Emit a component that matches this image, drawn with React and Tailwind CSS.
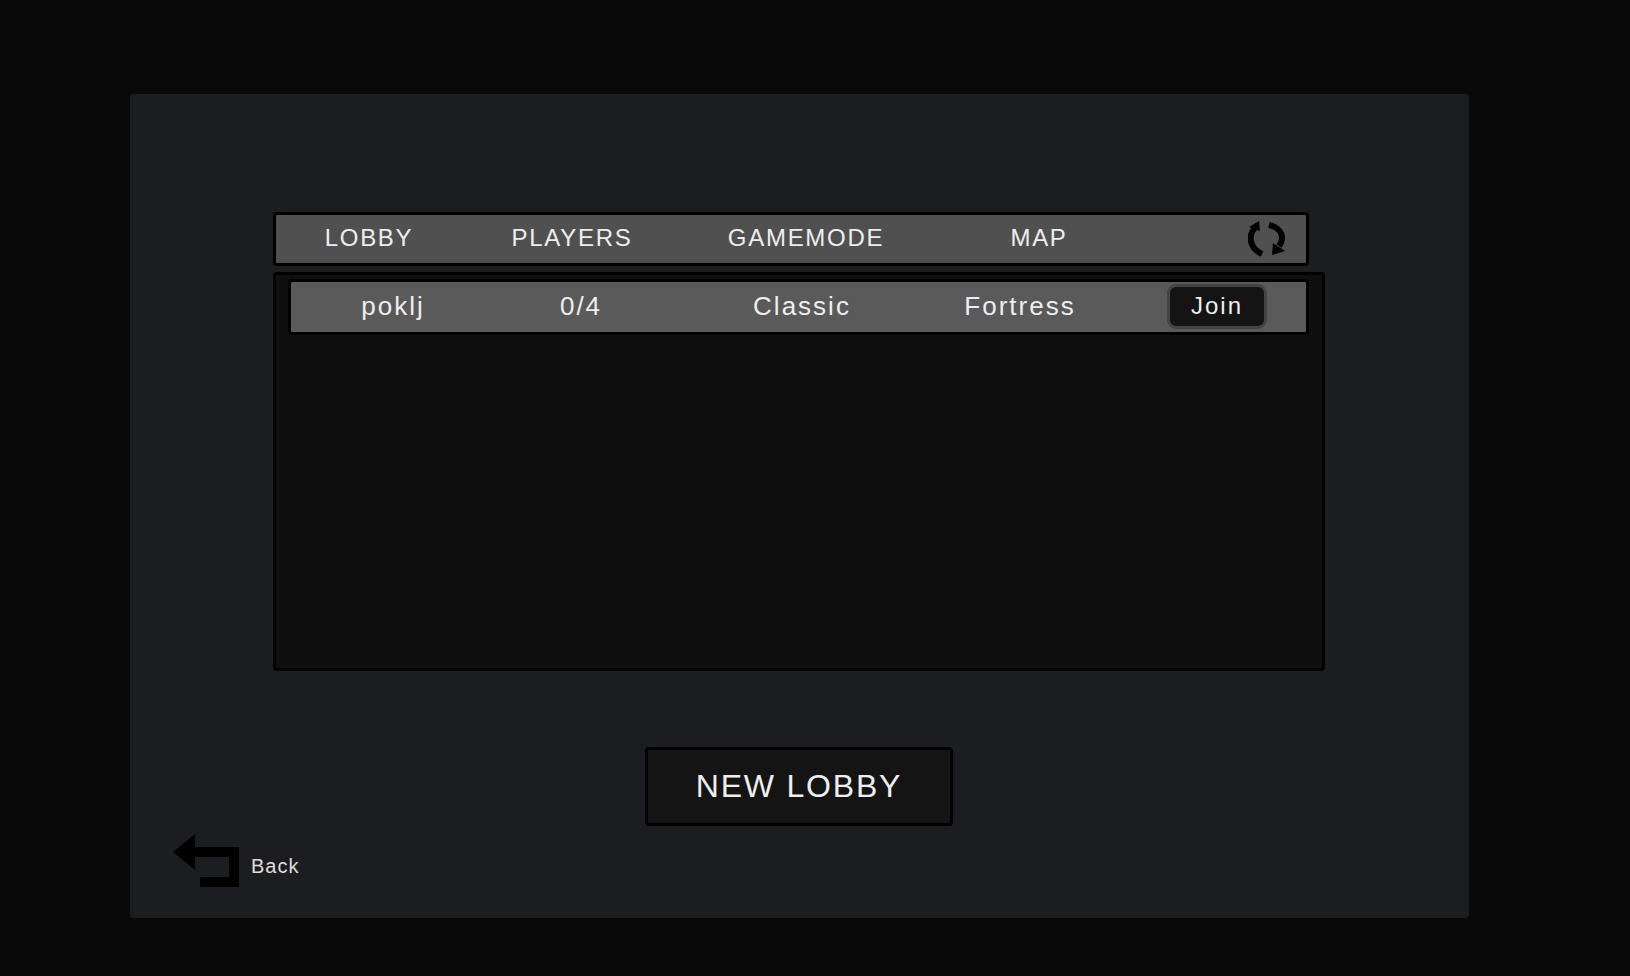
import React from "react";

const fontStack = "font-['Liberation_Sans',sans-serif]";

function RefreshIcon() {
  return (
    <svg width="37" height="36" viewBox="0 0 37 36" fill="none" className="shrink-0">
      <path d="M7 7 C0 14 1 27 14 33" stroke="#000" strokeWidth="6" />
      <path d="M1 6 L11 0 L12 10 Z" fill="#000" />
      <path d="M21 4 C34 7 37 17 31 25" stroke="#000" strokeWidth="6" />
      <path d="M25 22 L24 34 L37 30 Z" fill="#000" />
    </svg>
  );
}

function BackIcon() {
  return (
    <svg width="66" height="53" viewBox="0 0 66 53" fill="#000" className="shrink-0">
      <path d="M22 0 L0 18 L22 36 L22 23 L56 23 L56 43 L28 43 Q27 43 27 44 L27 52 Q27 53 28 53 L65 53 Q66 53 66 52 L66 13 L22 13 Z" />
    </svg>
  );
}

export default function App() {
  return (
    <div className={`min-h-screen bg-[#090909] pt-[94px] pl-[130px] ${fontStack}`}>
      <div className="w-[1339px] h-[824px] bg-[#1c1d21] rounded-[4px] pt-[118px] pl-[143px]">
        <div className="w-[1036px] h-[54px] border-[3px] border-black rounded-[4px] bg-[#505050] grid grid-cols-[186px_220px_248px_218px_1fr] items-center text-center text-[24px] tracking-[1.7px] text-[#eeeeee]">
          <div className="pb-[2px]">LOBBY</div>
          <div className="pb-[2px]">PLAYERS</div>
          <div className="pb-[2px]">GAMEMODE</div>
          <div className="pb-[2px]">MAP</div>
          <div className="flex justify-end pr-[21px]">
            <RefreshIcon />
          </div>
        </div>

        <div className="mt-[6px] w-[1052px] h-[399px] border-[3px] border-black rounded-[4px] bg-[#0f0f0f] pt-[4px] pl-[12px]">
          <div className="w-[1021px] h-[56px] border-[3px] border-black rounded-[4px] bg-[#5a5a5a] pb-[2px] grid grid-cols-[204px_172px_270px_166px_1fr] items-center text-center text-[26px] tracking-[2px] text-[#eeeeee]">
            <div>poklj</div>
            <div>0/4</div>
            <div>Classic</div>
            <div>Fortress</div>
            <div className="pl-[64px]">
              <button className="block w-[100px] h-[45px] border-[3px] border-[#444444] rounded-[9px] bg-[#141414] text-[24px] tracking-[2px] text-[#eeeeee]">
                Join
              </button>
            </div>
          </div>
        </div>

        <button className="block mt-[76px] ml-[372px] w-[308px] h-[79px] border-[3px] border-black rounded-[4px] bg-[#141414] pb-[2px] text-[32px] tracking-[1.8px] text-[#eeeeee]">
          NEW LOBBY
        </button>

        <div className="mt-[8px] -ml-[100px] flex items-end gap-[12px]">
          <BackIcon />
          <span className="text-[20px] leading-[24px] mb-[9px] tracking-[1px] text-[#dddddd]">Back</span>
        </div>
      </div>
    </div>
  );
}
